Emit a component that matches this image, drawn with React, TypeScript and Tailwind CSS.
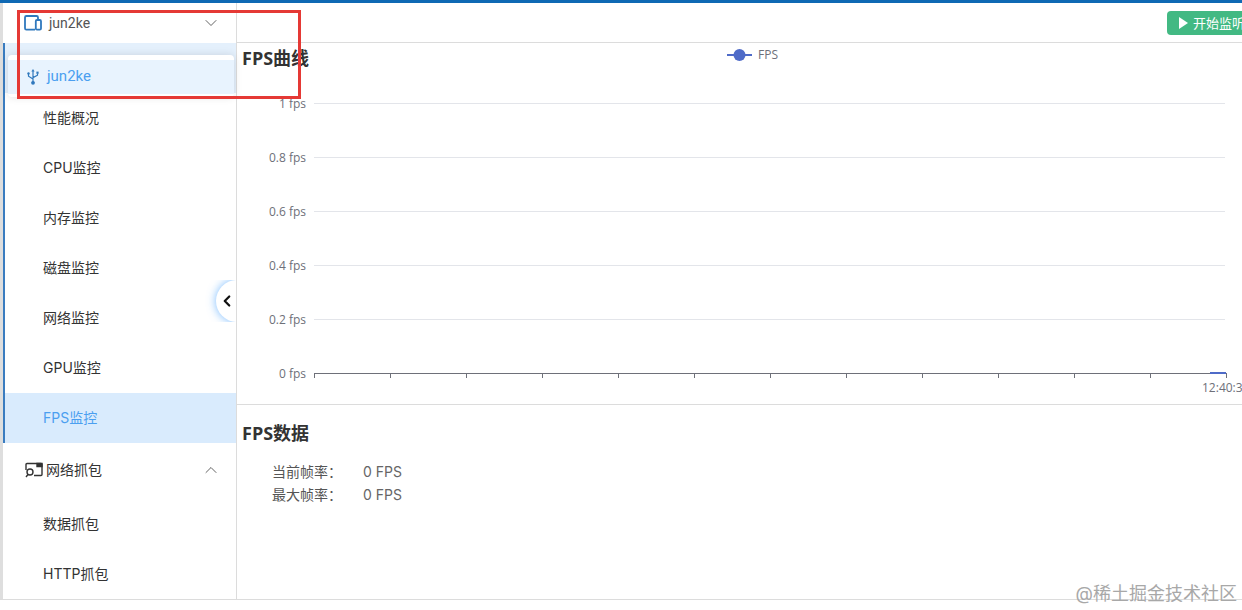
import React from 'react';
import { ChevronDown, ChevronUp, ChevronLeft } from 'lucide-react';

const SUB_MENU = ['性能概况', 'CPU监控', '内存监控', '磁盘监控', '网络监控', 'GPU监控', 'FPS监控'];
const CAPTURE_MENU = ['数据抓包', 'HTTP抓包'];
const Y_LABELS = ['1 fps', '0.8 fps', '0.6 fps', '0.4 fps', '0.2 fps', '0 fps'];
const X_TICKS = [77, 153, 229, 305, 381, 457, 533, 609, 685, 761, 837, 913, 989];

const DeviceIcon = () => (
  <svg width="18" height="16" viewBox="0 0 18 16" fill="none" stroke="#2f78bd" strokeWidth="1.8">
    <path d="M11 14.6H2.4a1.4 1.4 0 0 1-1.4-1.4V2.4A1.4 1.4 0 0 1 2.4 1h10.2a1.4 1.4 0 0 1 1.4 1.4V4" />
    <rect x="11.8" y="5" width="5.2" height="9.6" rx="1.2" />
  </svg>
);

const CaptureIcon = () => (
  <svg width="18" height="16" viewBox="0 0 18 16" fill="none" stroke="#333" strokeWidth="1.4">
    <path d="M1 8V2.5A1 1 0 0 1 2 1.5h14a1 1 0 0 1 1 1v10a1 1 0 0 1-1 1H9" />
    <path d="M12 1.5h5v3h-5z" fill="#333" />
    <circle cx="5" cy="10" r="3" />
    <path d="M3 12.5 1 15" />
  </svg>
);

const UsbIcon = () => (
  <svg width="12" height="16" viewBox="0 0 12 16" fill="none" stroke="#2f78bd" strokeWidth="1.2">
    <path d="M6 2v11M1.5 5v2.2L6 10M10.5 4.5v1.7L6 8.6" />
    <path d="M6 0 7.6 2.4H4.4z" fill="#2f78bd" stroke="none" />
    <circle cx="1.5" cy="4.4" r="1.2" fill="#2f78bd" stroke="none" />
    <rect x="9.4" y="2.6" width="2.2" height="2.2" fill="#2f78bd" stroke="none" />
    <circle cx="6" cy="13.8" r="1.9" fill="#2f78bd" stroke="none" />
  </svg>
);

const Chart = () => (
  <svg width="1005" height="321" viewBox="0 0 1005 321" className="block font-['Open_Sans',sans-serif]">
    {Y_LABELS.map((label, i) => {
      const y = 19 + i * 54;
      return (
        <g key={label}>
          <text x="69" y={y + 5} textAnchor="end" fontSize="12" fill="#6e7079">{label}</text>
          {i < 5 && <line x1="77" x2="988" y1={y + 0.5} y2={y + 0.5} stroke="#e3e5ea" />}
        </g>
      );
    })}
    <line x1="77" x2="989" y1="289.5" y2="289.5" stroke="#6e7079" />
    {X_TICKS.map(x => (
      <line key={x} x1={x + 0.5} x2={x + 0.5} y1="289" y2="294" stroke="#6e7079" />
    ))}
    <line x1="973" x2="989" y1="289" y2="289" stroke="#4f6bc8" strokeWidth="2" />
    <text x="965" y="308" fontSize="12" fill="#6e7079">12:40:33</text>
  </svg>
);

export default function App() {
  return (
    <div className="relative w-[1242px] h-[610px] overflow-hidden bg-white text-[#333] text-sm font-['Inter','Noto_Sans_CJK_SC',sans-serif]">
      <div className="h-[3px] bg-[#0f69b4]" />
      <div className="flex h-[597px] border-b border-[#dcdcdc]">
        {/* Page strip */}
        <div className="w-[3px] bg-[#dedede] shrink-0" />

        {/* Sidebar */}
        <div className="relative w-[234px] shrink-0 border-r border-[#dcdcdc]">
          <div className="flex items-center h-[40px] pl-[21px] pr-[15px]">
            <DeviceIcon />
            <span className="ml-[7px] flex-1 text-[#555] font-['Roboto','Noto_Sans_CJK_SC',sans-serif]">jun2ke</span>
            <ChevronDown size={20} strokeWidth={1} className="text-[#444]" />
          </div>
          <div className="h-[50px] border-l-2 border-[#3a7cc0] bg-[#e4f0fc]" />
          <div className="border-l-2 border-[#3a7cc0]">
            {SUB_MENU.map(item => (
              <div
                key={item}
                className={`flex items-center h-[50px] pl-[38px] ${item === 'FPS监控' ? 'bg-[#d9ebfd] text-[#4b9ff0]' : ''}`}
              >
                {item}
              </div>
            ))}
          </div>
          <div className="flex items-center h-[54px] pl-[22px] pr-[15px]">
            <CaptureIcon />
            <span className="ml-[3px] flex-1">网络抓包</span>
            <ChevronUp size={20} strokeWidth={1} className="text-[#444]" />
          </div>
          <div className="pt-[2px]">
            {CAPTURE_MENU.map(item => (
              <div key={item} className="flex items-center h-[50px] pl-[40px]">{item}</div>
            ))}
          </div>

          {/* Device dropdown */}
          <div className="absolute left-[5px] top-[52px] w-[226px] h-[42px] rounded bg-white shadow-[0_0_8px_rgba(0,0,0,0.12)]">
            <div className="absolute inset-x-0 top-[5px] flex items-center h-[34px] pl-[19px] bg-[#e8f3fe] text-[#4b9ff0]">
              <UsbIcon />
              <span className="ml-[8px] text-[15px] font-['Roboto','Noto_Sans_CJK_SC',sans-serif]">jun2ke</span>
            </div>
          </div>

          {/* Collapse handle */}
          <div className="absolute right-0 top-[277px] w-[36px] h-[42px] pl-[16px] overflow-hidden">
            <div className="flex items-center w-[42px] h-[42px] pl-[2px] rounded-full bg-white shadow-[0_0_10px_rgba(64,158,255,0.7)]">
              <ChevronLeft size={18} strokeWidth={3} className="text-[#111]" />
            </div>
          </div>
        </div>

        {/* Main */}
        <div className="flex-1 min-w-0">
          <div className="flex justify-end h-[40px] pt-[8px] border-b border-[#dcdcdc] -mr-[20px]">
            <div className="flex items-center h-[24px] w-[95px] pl-[12px] rounded bg-[#42b983] text-white text-[13px] whitespace-nowrap overflow-hidden">
              <span className="w-0 h-0 border-y-[6px] border-y-transparent border-l-[9px] border-l-white mr-[5px]" />
              开始监听
            </div>
          </div>
          <div className="h-[362px] border-b border-[#dcdcdc]">
            <div className="flex h-[41px]">
              <h2 className="pl-[5px] pt-[2px] text-lg font-bold text-[#333] leading-[26px] font-['Open_Sans','Noto_Sans_CJK_SC',sans-serif]">FPS曲线</h2>
              <div className="flex items-center h-[24px] ml-[418px] text-xs text-[#6e7079] font-['Open_Sans',sans-serif]">
                <svg width="25" height="14" viewBox="0 0 25 14" className="mr-[6px]">
                  <line x1="0" x2="25" y1="7" y2="7" stroke="#4f6bc8" strokeWidth="2" />
                  <circle cx="12.5" cy="7" r="6" fill="#4f6bc8" />
                </svg>
                FPS
              </div>
            </div>
            <Chart />
          </div>
          <div className="pl-[5px] pt-[15px]">
            <h2 className="text-lg font-bold leading-[26px] font-['Open_Sans','Noto_Sans_CJK_SC',sans-serif]">FPS数据</h2>
            <div className="mt-[14px] pl-[30px] text-sm text-[#555] leading-[23px]">
              <div className="flex"><span className="w-[91px]">当前帧率：</span><span className="text-[#666]">0 FPS</span></div>
              <div className="flex"><span className="w-[91px]">最大帧率：</span><span className="text-[#666]">0 FPS</span></div>
            </div>
          </div>
        </div>
      </div>

      {/* Annotation */}
      <div className="absolute left-[17px] top-[10px] w-[284px] h-[89px] border-[3px] border-[#e53935]" />
      {/* Watermark */}
      <div className="absolute right-[5px] bottom-[4px] text-lg leading-[24px] text-[#a8a8a8]">@稀土掘金技术社区</div>
    </div>
  );
}
